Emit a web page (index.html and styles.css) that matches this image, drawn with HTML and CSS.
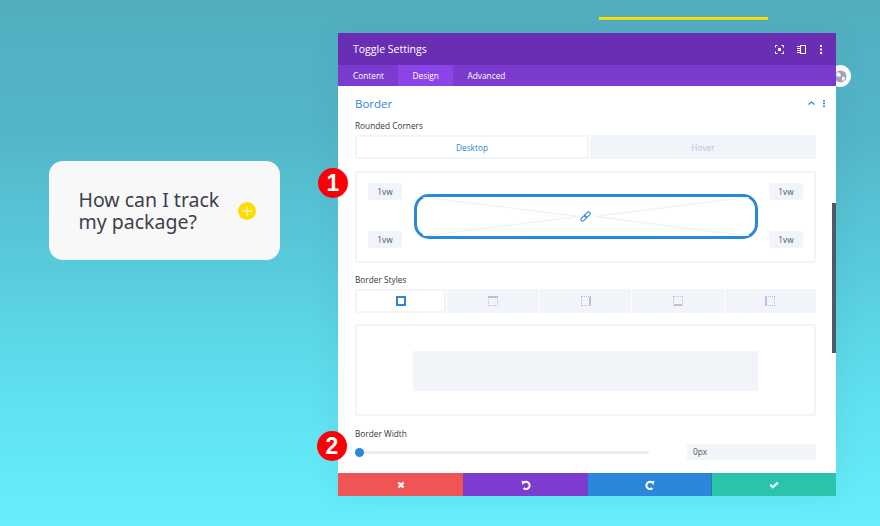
FILE: index.html
```html
<!DOCTYPE html>
<html lang="en">
<head>
<meta charset="utf-8">
<title>Toggle Settings</title>
<link rel="stylesheet" href="styles.css">
</head>
<body>
<div class="canvas">
  <div class="line"></div>

  <div class="card">
    <p class="question">How can I track my package?</p>
    <span class="plus"><svg width="18" height="18" viewBox="0 0 18 18"><path d="M9 4v10M4 9h10" stroke="#fff" stroke-width="1" fill="none"/></svg></span>
  </div>

  <span class="globe"><svg width="13" height="13" viewBox="0 0 13 13"><circle cx="6.5" cy="6.5" r="6" fill="#a9a6bb"/><path d="M3 2l3 1 1 3-3 1-2-2zM8 7l3 0-1 4-2-1z" fill="#fff"/></svg></span>

  <section class="modal">
    <header class="head">
      <h1 class="title">Toggle Settings</h1>
      <div class="head-icons">
        <svg width="9" height="9" viewBox="0 0 9 9"><path d="M.5 2.500v-2h2M6.500.5h2v2M8.500 6.500v2h-2M2.500 8.500h-2v-2" stroke="#fff" fill="none"/><rect x="3" y="3" width="3" height="3" fill="#fff"/></svg>
        <svg width="9" height="9" viewBox="0 0 9 9"><path d="M3.500 .5h5v8h-5zM3.500 .5v8" fill="none" stroke="#fff"/><path d="M0 1h3v1H0zM0 3h3v1H0zM0 5h3v1H0zM0 7h3v1H0z" fill="#fff"/></svg>
        <svg class="dots" width="3" height="9" viewBox="0 0 3 9"><path d="M0 0h2v2H0zM0 3.500h2v2H0zM0 7h2v2H0z" fill="#fff"/></svg>
      </div>
    </header>
    <nav class="tabs">
      <span class="tab">Content</span>
      <span class="tab tab-on">Design</span>
      <span class="tab">Advanced</span>
    </nav>
    <div class="body">
      <div class="section-head">
        <h2 class="section-title">Border</h2>
        <div class="section-icons">
          <svg width="7" height="4" viewBox="0 0 7 4"><path d="M.5 3.500l3-2.500 3 2.500" stroke="#2b87da" stroke-width="1.200" fill="none"/></svg>
          <svg width="2" height="7" viewBox="0 0 2 7"><path d="M0 0h2v1.500H0zM0 2.700h2v1.500H0zM0 5.400h2v1.500H0z" fill="#2b87da"/></svg>
        </div>
      </div>

      <div class="label">Rounded Corners</div>
      <div class="device-tabs">
        <span class="device device-on">Desktop</span>
        <span class="device">Hover</span>
      </div>

      <div class="corners">
        <div class="values">
          <span class="value">1vw</span>
          <span class="value">1vw</span>
        </div>
        <div class="corner-preview">
          <svg class="cross" viewBox="0 0 338 39" preserveAspectRatio="none"><path d="M6 0L162 19.500M6 39L162 19.500M332 0L178 19.500M332 39L178 19.500" stroke="#f0f2f8" stroke-width="1.300" fill="none"/></svg>
          <svg class="link" width="11" height="11" viewBox="0 0 11 11"><g fill="none" stroke="#2b87da" stroke-width="1.100" transform="rotate(-45 5.500 5.500)"><rect x="-.3" y="3.800" width="6.300" height="3.400" rx="1.700"/><rect x="5" y="3.800" width="6.300" height="3.400" rx="1.700"/></g></svg>
        </div>
        <div class="values">
          <span class="value">1vw</span>
          <span class="value">1vw</span>
        </div>
      </div>

      <div class="label label-bs">Border Styles</div>
      <div class="style-tabs">
        <span class="style style-on"><i class="sq sq-all"></i></span>
        <span class="style"><i class="sq sq-top"></i></span>
        <span class="style"><i class="sq sq-right"></i></span>
        <span class="style"><i class="sq sq-bottom"></i></span>
        <span class="style"><i class="sq sq-left"></i></span>
      </div>

      <div class="border-preview"><div class="preview-fill"></div></div>

      <div class="label label-bw">Border Width</div>
      <div class="width-row">
        <div class="slider"><span class="knob"></span></div>
        <span class="width-input">0px</span>
      </div>
    </div>
    <span class="scrollbar"></span>
    <footer class="foot">
      <span class="act act-red"><svg width="8" height="8" viewBox="0 0 8 8"><path d="M1.500 1.500l5 5M6.500 1.500l-5 5" stroke="#fff" stroke-width="2.400"/></svg></span>
      <span class="act act-purple"><svg width="10" height="10" viewBox="0 0 10 10"><path d="M2.200 3.200A3.600 3.600 0 1 1 2.500 8" stroke="#fff" stroke-width="2" fill="none"/><path d="M.5 .8L5 1.500 1.500 5z" fill="#fff"/></svg></span>
      <span class="act act-blue"><svg width="10" height="10" viewBox="0 0 10 10"><path d="M7.800 3.200A3.600 3.600 0 1 0 7.500 8" stroke="#fff" stroke-width="2" fill="none"/><path d="M9.500 .8L5 1.500 8.500 5z" fill="#fff"/></svg></span>
      <span class="act act-green"><svg width="10" height="8" viewBox="0 0 10 8"><path d="M1.200 3.800l2.700 2.500 5-4.800" stroke="#fff" stroke-width="2.200" fill="none"/></svg></span>
    </footer>
  </section>

  <span class="badge badge-1">1</span>
  <span class="badge badge-2">2</span>
</div>
</body>
</html>
```
FILE: styles.css
```css
* { box-sizing: border-box; }
html, body { margin: 0; padding: 0; }
body {
  width: 880px;
  height: 526px;
  overflow: hidden;
  font-family: "Open Sans", "Noto Sans", sans-serif;
}
.canvas {
  position: relative;
  width: 880px;
  height: 526px;
  background: linear-gradient(180deg, #52aebf 0%, #53b6c8 25%, #58cbdb 50%, #60e0ef 75%, #67effc 100%);
  overflow: hidden;
}
.line {
  position: absolute;
  left: 599px;
  top: 17px;
  width: 169px;
  height: 3px;
  background: linear-gradient(180deg, #ffe300 0%, #ffe300 66%, #c9c930 100%);
}
.card {
  position: absolute;
  left: 49px;
  top: 161px;
  width: 231px;
  height: 99px;
  background: #f8f8f9;
  border-radius: 14px;
  display: flex;
  align-items: center;
  justify-content: space-between;
  padding: 0 24px 0 29.500px;
}
.question {
  margin: 0;
  width: 145px;
  font-family: "Noto Sans", "Open Sans", sans-serif;
  font-size: 19.500px;
  line-height: 22px;
  color: #3d3f4c;
}
.plus {
  width: 18px;
  height: 18px;
  border-radius: 50%;
  background: #ffdd00;
  display: flex;
}
.globe {
  position: absolute;
  left: 829px;
  top: 65px;
  width: 22px;
  height: 22px;
  border-radius: 50%;
  background: #fff;
  display: flex;
  align-items: center;
  justify-content: center;
}
.modal {
  position: absolute;
  left: 338px;
  top: 33px;
  width: 498px;
  height: 463px;
  display: flex;
  flex-direction: column;
  background: #fff;
  box-shadow: 0 0 30px rgba(43, 60, 90, .08);
}
.head {
  height: 32px;
  flex: none;
  background: #6a2eb4;
  display: flex;
  align-items: center;
  justify-content: space-between;
  padding: 0 13px 0 15px;
}
.title {
  margin: 0;
  font-size: 10.500px;
  font-weight: 400;
  color: #fff;
}
.head-icons {
  display: flex;
  align-items: center;
  gap: 13px;
}
.dots { margin-left: 1px; }
.tabs {
  height: 21px;
  flex: none;
  background: #7b3bcf;
  display: flex;
}
.tab {
  font-size: 8.300px;
  color: #fff;
  display: flex;
  align-items: center;
  padding: 0 14.500px;
}
.tab:first-child { width: 60px; padding-left: 15px; }
.tab-on {
  background: #8c43e8;
  width: 55px;
}
.body {
  flex: 1;
  min-height: 0;
  padding: 0 20px 0 17px;
}
.section-head {
  height: 34px;
  display: flex;
  align-items: center;
  justify-content: space-between;
}
.section-title {
  margin: 0;
  font-size: 11.500px;
  font-weight: 400;
  color: #2b87da;
}
.section-icons {
  display: flex;
  align-items: center;
  gap: 8px;
  margin-right: -9px;
}
.label {
  font-size: 8.300px;
  line-height: 12px;
  color: #32373c;
}
.device-tabs {
  display: flex;
  gap: 1px;
  height: 24px;
  margin-top: 3px;
}
.device {
  flex: 1;
  display: flex;
  align-items: center;
  justify-content: center;
  font-size: 8.300px;
  color: #c6bedb;
  background: #f1f4f9;
  border-radius: 2px;
}
.device-on {
  flex: 0 0 234px;
  color: #2b87da;
  background: #fff;
  border: 2px solid #f1f4f9;
}
.corners {
  height: 92px;
  margin-top: 12px;
  border: 2px solid #f1f4f9;
  border-radius: 2px;
  display: flex;
  justify-content: space-between;
  padding: 10px 11px;
}
.values {
  display: flex;
  flex-direction: column;
  justify-content: space-between;
  height: 65px;
}
.value {
  width: 34px;
  height: 17px;
  background: #f1f4f9;
  border-radius: 2px;
  font-size: 8.300px;
  color: #4c5866;
  display: flex;
  align-items: center;
  justify-content: center;
}
.corner-preview {
  position: relative;
  width: 344px;
  height: 45px;
  margin-top: 11px;
  border: 3px solid #2b87da;
  border-radius: 15px;
  display: flex;
  align-items: center;
  justify-content: center;
}
.cross {
  position: absolute;
  inset: 0;
  width: 100%;
  height: 100%;
}
.link { position: relative; }
.label-bs { margin-top: 11px; }
.style-tabs {
  display: flex;
  gap: 1px;
  height: 24px;
  margin-top: 3px;
}
.style {
  flex: 1 1 0;
  background: #f1f4f9;
  border-radius: 2px;
  display: flex;
  align-items: center;
  justify-content: center;
}
.style-on {
  background: #fff;
  box-shadow: inset 0 0 0 2px #f1f4f9;
}
.sq {
  display: block;
  width: 10px;
  height: 10px;
  border: 1px dotted #c4b7e2;
}
.sq-all { border: 2px solid #2b87da; }
.sq-top { border-top: 2px solid #c4b7e2; }
.sq-right { border-right: 2px solid #c4b7e2; }
.sq-bottom { border-bottom: 2px solid #c4b7e2; }
.sq-left { border-left: 2px solid #c4b7e2; }
.border-preview {
  height: 92px;
  margin-top: 11px;
  border: 2px solid #f1f4f9;
  border-radius: 2px;
  padding: 25px 56px;
}
.preview-fill {
  height: 40px;
  background: #f1f4f9;
}
.label-bw { margin-top: 12px; }
.width-row {
  display: flex;
  align-items: center;
  justify-content: space-between;
  height: 16px;
  margin-top: 4px;
}
.slider {
  position: relative;
  width: 294px;
  height: 3px;
  background: #ebeaf5;
  border-radius: 2px;
}
.knob {
  position: absolute;
  left: 0;
  top: -3px;
  width: 9px;
  height: 9px;
  border-radius: 50%;
  background: #2b87da;
}
.width-input {
  width: 129px;
  height: 16px;
  background: #f1f4f9;
  border-radius: 2px;
  padding-left: 6px;
  font-size: 8.300px;
  line-height: 16px;
  color: #4c5866;
}
.scrollbar {
  position: absolute;
  right: 0;
  top: 170px;
  width: 4px;
  height: 150px;
  background: #4f5a68;
}
.foot {
  flex: none;
  height: 23px;
  display: flex;
}
.act {
  display: flex;
  align-items: center;
  justify-content: center;
}
.act-red { width: 125px; background: #ef5555; }
.act-purple { width: 125px; background: #7d3bcf; }
.act-blue { width: 123px; background: #2b87da; }
.act-green {
  width: 125px;
  background: #29c4a9;
  border-left: 1px solid #2c7f96;
}
.badge {
  position: absolute;
  width: 30px;
  height: 30px;
  border-radius: 50%;
  background: #fb0006;
  color: #fff;
  font-family: "Liberation Sans", Arial, sans-serif;
  font-size: 23px;
  font-weight: 700;
  line-height: 30px;
  text-align: center;
}
.badge-1 { left: 318px; top: 168px; }
.badge-2 { left: 317px; top: 431px; }
```
